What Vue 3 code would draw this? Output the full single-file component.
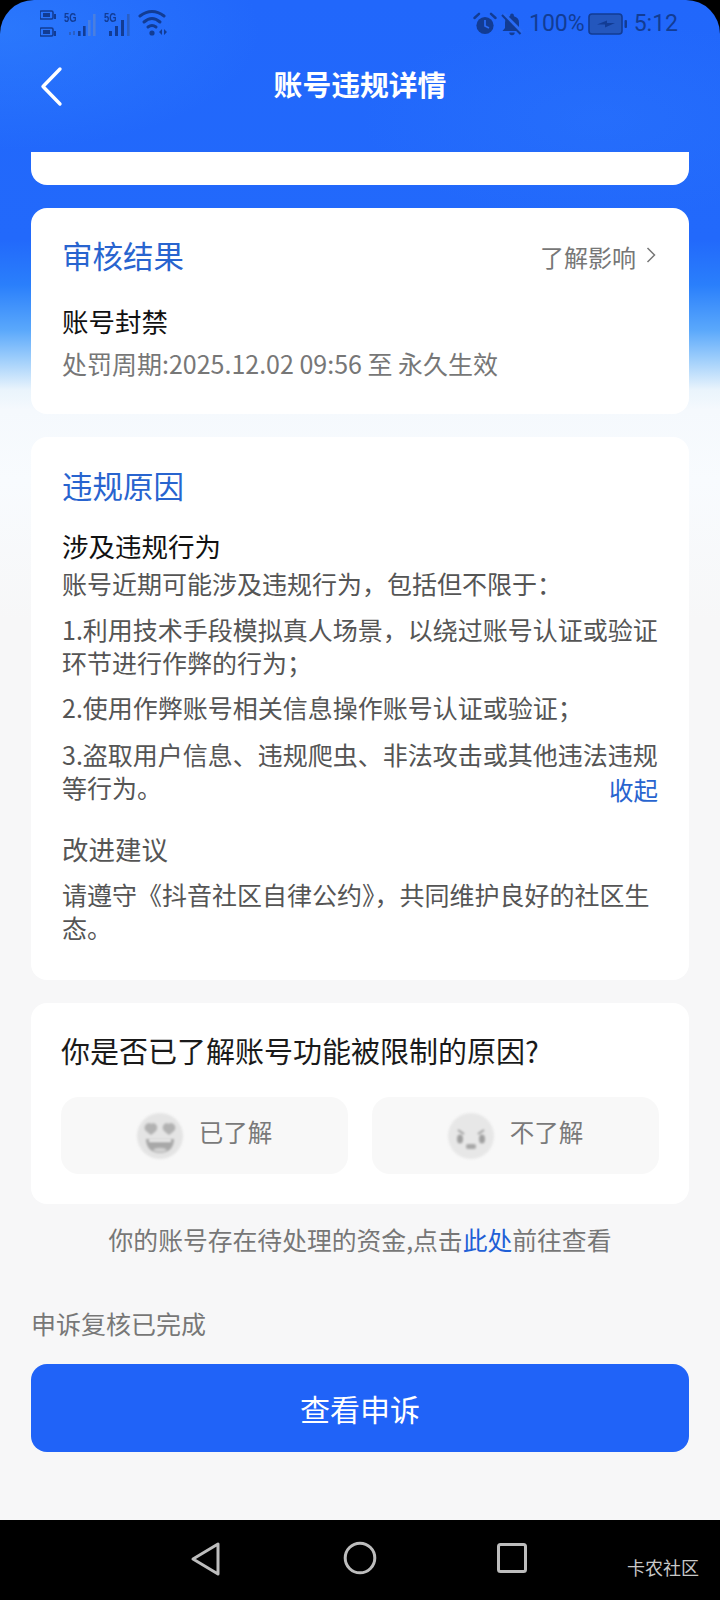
<script setup>
const rules = [
  '1.利用技术手段模拟真人场景，以绕过账号认证或验证环节进行作弊的行为；',
  '2.使用作弊账号相关信息操作账号认证或验证；',
]
</script>

<template>
  <div class="phone">
    <div class="screen">
      <div class="status">
        <div class="status-left">
          <svg class="sl" width="130" height="34" viewBox="0 0 130 34" fill="#123c94">
            <rect x="0" y="5" width="13" height="8" rx="1.5" fill="none" stroke="#123c94" stroke-width="1.6"/>
            <rect x="3" y="7" width="7" height="4"/>
            <rect x="14" y="8" width="2" height="5"/>
            <rect x="0" y="22" width="13" height="8" rx="1.5" fill="none" stroke="#123c94" stroke-width="1.6"/>
            <rect x="3" y="24" width="7" height="4"/>
            <rect x="14" y="25" width="2" height="5"/>
            <g fill="#2a5fc4">
              <rect x="29" y="26" width="2" height="3"/><rect x="33" y="25" width="2" height="4"/>
            </g>
            <rect x="38" y="25" width="2.6" height="5"/>
            <rect x="43" y="20" width="2.6" height="10"/>
            <g fill="#4a7fe0">
              <rect x="48" y="14" width="2.6" height="16"/><rect x="53" y="8" width="2.6" height="22"/>
            </g>
            <rect x="69" y="25" width="3" height="5"/>
            <rect x="75" y="20" width="3" height="10"/>
            <rect x="81" y="14" width="3" height="16"/>
            <rect x="87" y="8" width="2.6" height="22" fill="#2a5fc4"/>
            <g fill="none" stroke="#123c94" stroke-width="3" stroke-linecap="round">
              <path d="M100 10 Q112 1 124 10"/>
              <path d="M104 16 Q112 9 120 16"/>
              <path d="M108 21 Q112 18 116 21"/>
            </g>
            <circle cx="112" cy="27" r="2.6"/>
            <path d="M119 26 l3 -3 v6z M124 23 l3 3 -3 3z" fill="#123c94"/>
          </svg>
          <span class="fiveg a">5G</span>
          <span class="fiveg b">5G</span>
        </div>
        <div class="status-right">
          <svg width="24" height="24" viewBox="0 0 24 24" fill="#123c94">
            <circle cx="12" cy="13.5" r="8.6"/>
            <path d="M12 8v6l4 2" fill="none" stroke="#2a6cf6" stroke-width="1.7"/>
            <path d="M1.5 6 L6 1.8 M22.5 6 L18 1.8" stroke="#123c94" stroke-width="2.4" stroke-linecap="round"/>
          </svg>
          <svg class="bell" width="24" height="24" viewBox="0 0 24 24" fill="#123c94">
            <path d="M12 1.500a1.900 1.900 0 0 1 1.900 1.900v.8A6.800 6.800 0 0 1 19 11v5l2.500 3H2.500L5 16v-5a6.800 6.800 0 0 1 5.100-6.800v-.8A1.900 1.900 0 0 1 12 1.500z"/>
            <path d="M9.300 20.500h5.400a2.700 2.700 0 0 1-5.400 0z"/>
            <path d="M3.500 2 L22 20.500" stroke="#2a6cf6" stroke-width="3.600"/>
            <path d="M2 3 L20.500 22" stroke="#123c94" stroke-width="2"/>
          </svg>
          <span class="pct">100%</span>
          <svg width="40" height="22" viewBox="0 0 40 22">
            <rect x="1" y="1" width="33" height="20" rx="3" fill="#2457bd" stroke="#123c94" stroke-width="1.6"/>
            <path d="M9 11.500 L19 7.500 V10 H27 L17 14.500 V11.500z" fill="#123c94"/>
            <rect x="36.500" y="7" width="2.500" height="8" rx="1" fill="#123c94"/>
          </svg>
          <span class="clock">5:12</span>
        </div>
      </div>

      <header class="nav">
        <svg class="back" width="26" height="42" viewBox="0 0 26 42">
          <path d="M21 3 L4 20.500 L21 38" fill="none" stroke="#fff" stroke-width="3.400" stroke-linecap="round" stroke-linejoin="round"/>
        </svg>
        <h1>账号违规详情</h1>
      </header>

      <main class="content">
        <div class="sliver"></div>

        <section class="card result">
          <div class="head">
            <h2>审核结果</h2>
            <div class="more">
              <span>了解影响</span>
              <svg width="10" height="16" viewBox="0 0 10 16">
                <path d="M1.500 1 L8.500 8 L1.500 15" fill="none" stroke="#777" stroke-width="1.500"/>
              </svg>
            </div>
          </div>
          <p class="strong">账号封禁</p>
          <p class="period">处罚周期:2025.12.02 09:56 至 永久生效</p>
        </section>

        <section class="card reason">
          <h2>违规原因</h2>
          <p class="strong sub">涉及违规行为</p>
          <p class="body lead">账号近期可能涉及违规行为，包括但不限于：</p>
          <p v-for="r in rules" :key="r" class="body rule">{{ r }}</p>
          <p class="body rule third">3.盗取用户信息、违规爬虫、非法攻击或其他违法违规等行为。<span class="collapse">收起</span></p>
          <p class="advice-title">改进建议</p>
          <p class="body advice">请遵守《抖音社区自律公约》，共同维护良好的社区生态。</p>
        </section>

        <section class="card survey">
          <h3>你是否已了解账号功能被限制的原因?</h3>
          <div class="choices">
            <button class="choice">
              <svg class="face" width="46" height="46" viewBox="0 0 46 46">
                <circle cx="23" cy="23" r="23" fill="#e4e4e4"/>
                <path d="M13 10c-5 0-7 5-4 8l5 4 5-4c3-4 0-8-3-8l-1.500 1z" fill="#b2b2b2"/>
                <path d="M33 10c5 0 7 5 4 8l-5 4-5-4c-3-4 0-8 3-8l1.500 1z" fill="#b2b2b2"/>
                <path d="M9 26h28c0 9-6 14-14 14S9 35 9 26z" fill="#a8a8a8"/>
                <path d="M12 26.500h22v2.500H12z" fill="#f2f2f2"/>
                <path d="M16 37c2-3 12-3 14 0-4 3-10 3-14 0z" fill="#d2d2d2"/>
              </svg>
              <span>已了解</span>
            </button>
            <button class="choice">
              <svg class="face" width="46" height="46" viewBox="0 0 46 46">
                <circle cx="23" cy="23" r="23" fill="#e7e7e7"/>
                <path d="M10 17l6 4M36 17l-6 4" stroke="#a0a0a0" stroke-width="2" fill="none"/>
                <ellipse cx="12" cy="26" rx="3" ry="4.500" fill="#a0a0a0"/>
                <ellipse cx="34" cy="26" rx="3" ry="4.500" fill="#a0a0a0"/>
                <rect x="18" y="31" width="10" height="5" rx="2" fill="#a8a8a8"/>
              </svg>
              <span>不了解</span>
            </button>
          </div>
        </section>

        <p class="notice">你的账号存在待处理的资金,点击<span class="link">此处</span>前往查看</p>
        <p class="appeal">申诉复核已完成</p>
        <button class="primary">查看申诉</button>
      </main>
    </div>

    <footer class="sysnav">
      <svg width="32" height="36" viewBox="0 0 32 36">
        <path d="M28 3 V33 L3 18z" fill="none" stroke="#bdbdbd" stroke-width="3" stroke-linejoin="round"/>
      </svg>
      <svg width="34" height="34" viewBox="0 0 34 34">
        <circle cx="17" cy="17" r="14.800" fill="none" stroke="#bdbdbd" stroke-width="3"/>
      </svg>
      <svg width="32" height="32" viewBox="0 0 32 32">
        <rect x="2.500" y="2.500" width="27" height="27" rx="2" fill="none" stroke="#bdbdbd" stroke-width="3"/>
      </svg>
      <span class="mark">卡农社区</span>
    </footer>
  </div>
</template>

<style>
html, body { margin: 0; background: #000; }
</style>

<style scoped>
.phone {
  width: 720px;
  height: 1600px;
  background: #000;
  display: flex;
  flex-direction: column;
  overflow: hidden;
  font-family: "Noto Sans CJK SC", "Noto Sans", sans-serif;
}
.screen {
  height: 1520px;
  flex: none;
  border-radius: 34px 34px 0 0;
  overflow: hidden;
  background:
    radial-gradient(ellipse 240px 100px at 600px 120px, rgba(60,140,255,.15), transparent),
    radial-gradient(ellipse 260px 120px at 0 30px, rgba(60,150,255,.35), transparent),
    linear-gradient(180deg, #2167fb 0, #2269fb 240px, #2a7ffb 285px, #5aa8fb 330px, #a0cffb 360px, #eaf4fc 390px, #f5f9fd 410px, #f8fbfe 480px, #f7f7f8 620px);
}
.status {
  height: 48px;
  position: relative;
  display: flex;
  justify-content: space-between;
  align-items: center;
  padding: 0 42px 0 40px;
  color: #123c94;
}
.status-left { position: relative; width: 130px; height: 34px; margin-top: -2px; }
.fiveg { position: absolute; font: 700 13px/12px "Liberation Sans", sans-serif; transform: scaleX(.72); transform-origin: left top; }
.fiveg.a { left: 24px; top: 6px; }
.fiveg.b { left: 64px; top: 6px; }
.status-right { display: flex; align-items: center; }
.bell { margin-left: 3px; }
.pct, .clock { font: 400 23px/28px Roboto, sans-serif; }
.pct { margin: 0 3px 0 5px; }
.clock { margin-left: 6px; }
.nav {
  height: 72px;
  position: relative;
  display: flex;
  align-items: center;
  justify-content: center;
}
.back { position: absolute; left: 39px; top: 18px; }
h1 {
  margin: 0;
  font-size: 28.800px;
  line-height: 40px;
  font-weight: 700;
  color: #fff;
}
.content { padding: 32px 31px 0; display: flex; flex-direction: column; }
.sliver {
  height: 33px;
  background: #fff;
  border-radius: 0 0 16px 16px;
  margin-bottom: 23px;
}
.card {
  background: #fff;
  border-radius: 16px;
  padding: 0 31px;
  margin-bottom: 23px;
  box-sizing: border-box;
}
p, h2, h3 { margin: 0; font-weight: 400; }
h2 { font-size: 30.500px; line-height: 40px; color: #2864cf; }
.result { height: 206px; padding-top: 27px; }
.head { display: flex; justify-content: space-between; align-items: center; }
.more { display: flex; align-items: center; gap: 10px; font-size: 24px; color: #777; }
.more span { padding-top: 2px; }
.more svg { margin-right: 2px; }
.strong { font-size: 26.500px; line-height: 36px; color: #111; margin-top: 28px; }
.period { font-size: 25px; line-height: 36px; color: #777; margin-top: 6px; }
.reason { height: 543px; padding-top: 28px; }
.sub { margin-top: 23px; }
.body { font-size: 25px; line-height: 33px; color: #555; }
.lead { margin-top: 3px; }
.rule { margin-top: 13px; }
.rule + .rule { margin-top: 12px; }
.rule.third { margin-top: 14px; }
.collapse { float: right; margin-top: 2px; font-size: 24.500px; line-height: 33px; color: #2864cf; }
.advice-title { font-size: 26.500px; line-height: 36px; color: #555; margin-top: 27px; }
.advice { margin-top: 11px; }
.survey { height: 201px; padding: 27px 30px 0; }
h3 { font-size: 29px; line-height: 40px; color: #1a1a1a; }
.choices { display: grid; grid-template-columns: 287px 287px; gap: 24px; margin-top: 27px; }
.choice {
  height: 77px;
  border: 0;
  border-radius: 18px;
  background: #f8f8f8;
  display: flex;
  align-items: center;
  justify-content: center;
  gap: 16px;
  font: inherit;
  font-size: 24.500px;
  color: #7a7a7a;
  padding: 0;
}
.choice span { padding-bottom: 8px; }
.face { filter: blur(.8px); }
.notice {
  font-size: 24.800px;
  line-height: 36px;
  color: #777;
  text-align: center;
  margin-top: -6px;
}
.link { color: #1f5fd6; }
.appeal { font-size: 25px; line-height: 36px; color: #777; margin-top: 48px; }
.primary {
  margin-top: 23px;
  height: 88px;
  border: 0;
  border-radius: 16px;
  background: #2063f8;
  color: #fff;
  font: inherit;
  font-size: 30px;
}
.sysnav {
  height: 80px;
  position: relative;
  background: #000;
}
.sysnav svg { position: absolute; top: 21px; }
.sysnav svg:nth-child(1) { left: 190px; }
.sysnav svg:nth-child(2) { left: 343px; }
.sysnav svg:nth-child(3) { left: 496px; top: 22px; }
.mark { position: absolute; right: 21px; top: 35px; font-size: 18px; line-height: 24px; color: #c8c8c8; }
</style>
